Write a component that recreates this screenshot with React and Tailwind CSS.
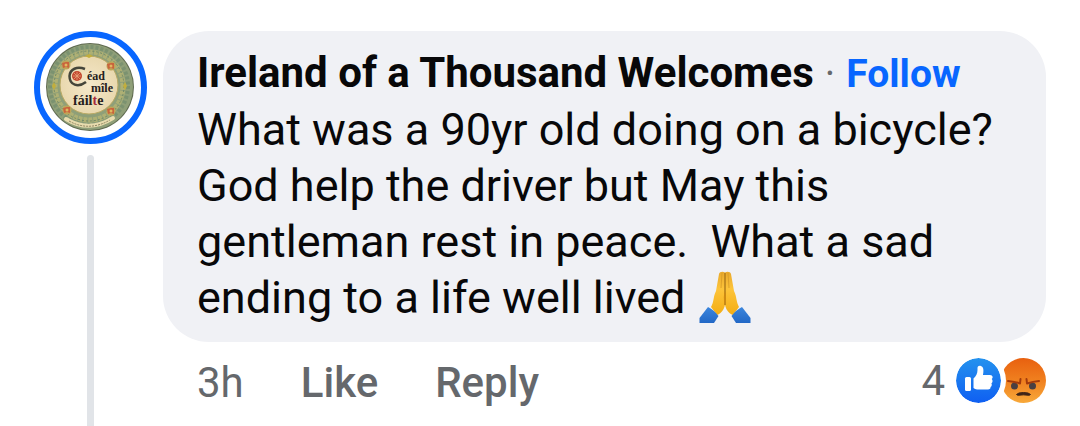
const COMMENT = {
  author: "Ireland of a Thousand Welcomes",
  text: "What was a 90yr old doing on a bicycle? God help the driver but May this gentleman rest in peace.  What a sad ending to a life well lived ",
  age: "3h",
  reactions: 4,
};

const CORNERS = [
  [32, 34],
  [77, 35],
  [33, 79],
  [77, 80],
];

function Avatar() {
  return (
    <svg viewBox="0 0 113 113" className="block w-full" role="img" aria-label="Céad míle fáilte">
      <defs>
        <radialGradient id="cream">
          <stop offset="0" stopColor="#f5e8ca" />
          <stop offset="1" stopColor="#e9d8ae" />
        </radialGradient>
      </defs>
      <circle cx="56.5" cy="56.5" r="53.5" fill="#fff" stroke="#0866ff" strokeWidth="6" />
      <circle cx="56" cy="56" r="44" fill="#5f6a50" />
      <circle cx="56" cy="56" r="43" fill="#8f9f78" />
      <circle cx="55" cy="55" r="39" fill="none" stroke="#7b9270" strokeWidth="4" strokeDasharray="3 2" />
      <circle cx="55" cy="55" r="34" fill="none" stroke="#aeb074" strokeWidth="5" strokeDasharray="4 1" />
      <circle cx="55" cy="55" r="35" fill="none" stroke="#6d8768" strokeWidth="1" strokeDasharray="2 2" />
      <circle cx="55" cy="54" r="29" fill="url(#cream)" stroke="#b9a964" strokeWidth="1" />

      {/* knotwork corners */}
      {CORNERS.map(([x, y]) => (
        <g key={`${x}-${y}`}>
          <circle cx={x} cy={y} r="4.5" fill="#bfa457" />
          <path d={`M${x - 4} ${y - 2}L${x} ${y - 3}L${x + 3} ${y - 3}L${x + 3} ${y + 3}L${x} ${y + 2}L${x - 3} ${y + 3}Z`} fill="#c9643c" />
          <circle cx={x} cy={y} r="1.5" fill="#e0b860" />
        </g>
      ))}
      <path d="M51 25l4-2 4 2-4 2zM18 55l2-4 2 4-2 4zM89 55l2-4 2 4-2 4z" fill="#c2ae3c" />

      {/* illuminated capital */}
      <path d="M51 38C43 35 36 38 35.500 45C35.500 54 44 57 52 51" fill="none" stroke="#45453a" strokeWidth="2.500" />
      <circle cx="43" cy="45" r="5" fill="#c4472f" />
      <path d="M39 45h8M43 41v8M40 42l6 6M46 42l-6 6" stroke="#e6a37a" strokeWidth=".8" />

      <g fill="#25201b" fontFamily="'Liberation Serif', serif" fontWeight="700" fontSize="12">
        <text x="53" y="49">éad</text>
        <text x="57" y="61">mîle</text>
        <text x="39" y="74" fontSize="14">fáil<tspan fill="#a52a3c">t</tspan>e</text>
      </g>

      <path d="M32 88Q55 102 79 87" fill="none" stroke="#e8dcae" strokeWidth="4" strokeLinecap="round" />
      <path d="M35 90Q55 101 76 89" fill="none" stroke="#8b8360" strokeWidth="1" strokeDasharray="2 1" />
    </svg>
  );
}

function FoldedHands() {
  return (
    <svg viewBox="0 0 52 52" className="-mt-2 ml-[2px] inline-block size-[52px] align-[-10px]" role="img" aria-label="folded hands">
      <defs>
        <linearGradient id="skin" x1="0" y1="0" x2="0" y2="1">
          <stop offset="0" stopColor="#e9a92c" />
          <stop offset=".4" stopColor="#fdc43a" />
          <stop offset="1" stopColor="#f3ad14" />
        </linearGradient>
        <linearGradient id="sleeve" x1="0" y1="0" x2="0" y2="1">
          <stop offset="0" stopColor="#3b86dd" />
          <stop offset="1" stopColor="#2268c6" />
        </linearGradient>
      </defs>
      <path d="M26 1.500C24 0 20.500.5 20 3L17 20C14 26 15 31 12 36L18 44C23 42 25 38 26 34Z" fill="url(#skin)" />
      <path d="M26 1.500C28 0 31.500.5 32 3L35 20C38 26 37 31 40 36L34 44C29 42 27 38 26 34Z" fill="url(#skin)" />
      <path d="M26 2V34" fill="none" stroke="#b07d1c" strokeWidth="1.5" />
      <path d="M23 2L22 17M29 2L30 17" fill="none" stroke="#d79a26" strokeWidth=".8" />
      <path d="M26 20Q24 25 25.500 34Q28 29 26 20Z" fill="#cf8a12" />
      <path d="M9 36Q15 39 19.500 45L15 52H.5V47Z" fill="url(#sleeve)" />
      <path d="M43 36Q37 39 32.500 45L37 52H51.500V47Z" fill="url(#sleeve)" />
    </svg>
  );
}

function LikeIcon() {
  return (
    <svg viewBox="0 0 45 45" className="relative size-[45px] rounded-full ring-5 ring-white" role="img" aria-label="Like">
      <defs>
        <linearGradient id="like" x1="0" y1="0" x2="0" y2="1">
          <stop offset="0" stopColor="#2492ee" />
          <stop offset="1" stopColor="#0f5ff2" />
        </linearGradient>
      </defs>
      <circle cx="22.500" cy="22.500" r="22.500" fill="url(#like)" />
      <rect x="9" y="19" width="6" height="14" rx="1.500" fill="#fff" />
      <path
        d="M17.500 20.500C20 18.500 21.500 15.500 21.500 12V10C21.500 8.200 23 7.500 24.300 7.800C27.500 8.500 27.800 12 27.200 15.500L26.900 17H34C37 17 37.300 20.200 35.700 21C37 22 36.800 24.500 35.400 25.200C36.200 26.500 35.700 28.500 34.500 29C34.900 30.300 33.700 31.500 32 31.500H23C20.500 31.500 19 31 17.500 30Z"
        fill="#fff"
      />
    </svg>
  );
}

function AngryIcon() {
  return (
    <svg viewBox="0 0 45 45" className="size-[45px]" role="img" aria-label="Angry">
      <defs>
        <linearGradient id="angry" x1="0" y1="0" x2="0" y2="1">
          <stop offset="0" stopColor="#e8600f" />
          <stop offset=".5" stopColor="#f0801f" />
          <stop offset="1" stopColor="#f8a93a" />
        </linearGradient>
      </defs>
      <circle cx="22.500" cy="22.500" r="22.500" fill="url(#angry)" />
      <ellipse cx="13.500" cy="28" rx="3.500" ry="3.500" fill="#4a3f42" />
      <ellipse cx="31.500" cy="28" rx="3.500" ry="3.500" fill="#4a3f42" />
      <path d="M7 23Q13 23.500 19 25.500L19.500 21M38 23Q32 23.500 26 25.500L25.500 21" fill="none" stroke="#a33a0c" strokeWidth="2" strokeLinecap="round" strokeLinejoin="round" />
      <path d="M15.500 36.500Q17 34.500 22.500 34.500T29.500 36.500Q29 37.500 27 37.200Q22.500 36.500 18 37.200Q16 37.500 15.500 36.500Z" fill="#3f2417" stroke="#3f2417" strokeLinejoin="round" />
    </svg>
  );
}

export default function App() {
  return (
    <main className="flex min-h-screen gap-4 bg-white px-[34px] pt-[31px] font-['Roboto',sans-serif]">
      <div className="flex w-[113px] shrink-0 flex-col items-center">
        <Avatar />
        <div className="mt-[11px] w-[7px] grow rounded-t-full bg-[#e1e4e8]" />
      </div>

      <article className="min-w-0 grow">
        <div className="rounded-[46px] bg-[#f0f1f5] px-[34px] pt-[14px] pb-4 text-[#080809]">
          <header className="flex items-baseline leading-[56px]">
            <h1 className="text-[42px] font-bold">{COMMENT.author}</h1>
            <span className="px-[11px] text-[40px] text-[#65686c]">·</span>
            <button type="button" className="text-[39px] font-bold text-[#0866ff]">Follow</button>
          </header>
          <p className="text-[45px] leading-[56px] whitespace-pre-wrap">
            {COMMENT.text}
            <FoldedHands />
          </p>
        </div>

        <footer className="flex items-start justify-between pt-4 pl-[34px] text-[42px] text-[#65686c]">
          <div className="flex gap-[57px] leading-[49px]">
            <span>{COMMENT.age}</span>
            <button type="button" className="font-medium">Like</button>
            <button type="button" className="font-medium">Reply</button>
          </div>
          <div className="flex items-center leading-[45px]">
            <span className="mr-[11px]">{COMMENT.reactions}</span>
            <LikeIcon />
            <AngryIcon />
          </div>
        </footer>
      </article>
    </main>
  );
}
